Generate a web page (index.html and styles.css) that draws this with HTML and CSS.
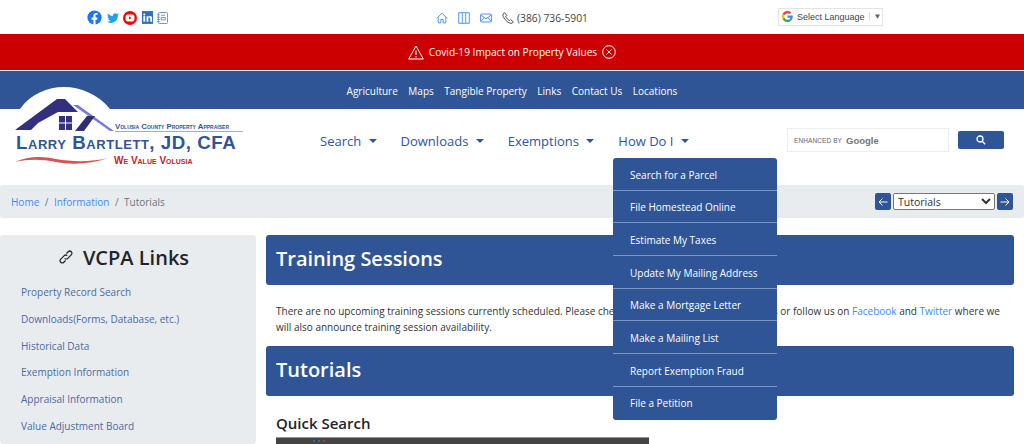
FILE: index.html
```html
<html>
<head>
    <title>Tutorials - Volusia County Property Appraiser</title>
    <link rel="stylesheet" href="styles.css">
</head>
<body>
    <!-- Top strip -->
    <div class="top-bar">
        <div class="social">
            <svg width="15" height="15" viewBox="0 0 16 16"><circle cx="8" cy="8" r="7.6" fill="#1877f2"/><path d="M6.8 16V10.3H4.8V8H6.8V6.2C6.8 4.2 8 3.1 9.8 3.1C10.6 3.1 11.3 3.2 11.3 3.2V5.1H10.3C9.4 5.1 9.1 5.7 9.1 6.3V8H11.2L10.9 10.3H9.1V16Z" fill="#fff"/></svg>
            <svg width="12" height="10" viewBox="0 0 16 13"><path d="M16 1.6C15.4 1.9 14.8 2 14.1 2.1C14.8 1.7 15.3 1.1 15.6 .3C14.9 .7 14.2 1 13.4 1.1C12.8 .4 11.9 0 11 0C9.2 0 7.7 1.5 7.7 3.3C7.7 3.6 7.7 3.8 7.8 4C5.1 3.9 2.6 2.6 1.1 .6C.8 1.1 .7 1.6 .7 2.2C.7 3.3 1.3 4.3 2.2 4.9C1.6 4.9 1.1 4.7 .7 4.5C.7 6.1 1.8 7.4 3.3 7.7C2.8 7.9 2.3 7.9 1.8 7.8C2.2 9.1 3.4 10 4.9 10.1C3.3 11.3 1.5 11.8 0 11.6C1.5 12.5 3.2 13 5 13C11 13 14.4 8 14.4 3.7V3.2C15 2.8 15.6 2.2 16 1.6Z" fill="#1da1f2"/></svg>
            <svg width="14" height="14" viewBox="0 0 14 14"><circle cx="7" cy="7" r="7" fill="#f00"/><rect x="2.6" y="3.6" width="8.8" height="6.8" rx="2" fill="#fff"/><path d="M6 5.4V8.6L8.6 7Z" fill="#f00"/></svg>
            <svg width="11" height="13" viewBox="0 0 12 14"><rect width="12" height="14" fill="#2f72b8"/><rect x="1.5" y="5.5" width="2" height="6" fill="#fff"/><circle cx="2.5" cy="3.6" r="1.1" fill="#fff"/><path d="M5 5.5H7V6.4C7.5 5.6 8.2 5.3 9 5.3C10.5 5.3 11 6.3 11 7.8V11.5H9V8.2C9 7.4 8.7 7 8 7C7.3 7 7 7.5 7 8.2V11.5H5Z" fill="#fff"/></svg>
            <svg width="11" height="12" viewBox="0 0 12 13" fill="none" stroke="#6b8fbf"><rect x="1.5" y=".5" width="10" height="12" rx="1"/><path d="M0 3H3M0 5.5H3M0 8H3M0 10.500H3M4.500 3.500H9M4.500 6H9V8.500H4.500Z"/></svg>
        </div>
        <div class="contact">
            <svg width="12" height="12" viewBox="0 0 16 16" fill="none" stroke="#3d8bfd" stroke-width="1.200"><path d="M1 8.500L8 1.500L15 8.500M3 7V14.500H6.500V10H9.500V14.500H13V7"/></svg>
            <svg width="12" height="12" viewBox="0 0 16 16" fill="none" stroke="#3d8bfd" stroke-width="1.200"><rect x="1" y="1" width="14" height="14"/><path d="M5.700 1V15M10.300 1V15"/></svg>
            <svg width="12" height="10" viewBox="0 0 16 12" fill="none" stroke="#3d8bfd" stroke-width="1.200"><rect x=".7" y=".7" width="14.600" height="10.600" rx="1.500"/><path d="M1 2L8 7L15 2M1 10.500L6 5.500M15 10.500L10 5.500"/></svg>
            <span class="phone">
                <svg width="12" height="12" viewBox="0 0 16 16" fill="none" stroke="#444" stroke-width="1.200"><path d="M3.500 1L1.500 2.500C.5 4 1.500 7 4.500 10.500C8 14.500 11.500 15.500 13.500 15L15 13L11.500 10L10 11.500C8.500 11 5.500 8 5 6L6.500 4.500Z"/></svg>
                (386) 736-5901
            </span>
        </div>
        <div class="translate">
            <svg width="11" height="11" viewBox="0 0 48 48"><path fill="#ea4335" d="M24 9.500c3.500 0 6.700 1.300 9.200 3.600l6.800-6.800C35.900 2.400 30.500 0 24 0 14.600 0 6.500 5.400 2.600 13.200l8 6.200C12.400 13.700 17.700 9.500 24 9.500z"/><path fill="#4285f4" d="M47 24.500c0-1.600-.1-3.100-.4-4.500H24v9h12.900c-.6 3-2.200 5.500-4.700 7.200l7.700 6C44.400 38 47 31.800 47 24.500z"/><path fill="#fbbc05" d="M10.500 28.600c-.5-1.500-.8-3-.8-4.600s.3-3.100.8-4.600l-8-6.200C.9 16.500 0 20.100 0 24s.9 7.500 2.600 10.800z"/><path fill="#34a853" d="M24 48c6.500 0 11.900-2.100 15.900-5.800l-7.700-6c-2.100 1.400-4.900 2.300-8.200 2.300-6.300 0-11.600-4.200-13.500-9.900l-8 6.200C6.500 42.600 14.600 48 24 48z"/></svg>
            <span class="translate-label">Select Language</span>
            <span class="translate-arrow">▼</span>
        </div>
    </div>

    <!-- Covid notice -->
    <div class="alert-bar">
        <svg width="16" height="15" viewBox="0 0 16 15" fill="none" stroke="#fff" stroke-width="1"><path d="M8 1L15.300 14H.7Z"/><path d="M8 5.500V10M8 11.200V12.500"/></svg>
        <span>Covid-19 Impact on Property Values</span>
        <svg width="14" height="14" viewBox="0 0 14 14" fill="none" stroke="#fff"><circle cx="7" cy="7" r="6.300"/><path d="M4.500 4.500L9.500 9.500M9.500 4.500L4.500 9.500"/></svg>
    </div>

    <nav class="sub-nav">
        <a href="#">Agriculture</a>
        <a href="#">Maps</a>
        <a href="#">Tangible Property</a>
        <a href="#">Links</a>
        <a href="#">Contact Us</a>
        <a href="#">Locations</a>
    </nav>

    <!-- Logo + main nav -->
    <header class="main-header">
        <div class="logo">
            <svg class="logo-art" width="244" height="84" viewBox="0 0 244 84">
                <path d="M20 23C30 8 48 1 64 1C80 1 98 8 110 23Z" fill="#fff"/>
                <path d="M73 19L78 19L114 45H110Z" fill="#7d79dc"/>
                <path d="M15 44L57 13H65L78 26H58L38 37L31 44Z" fill="#34307f"/>
                <path d="M75 45L87 30H95L84 45Z" fill="#2f2f73"/>
                <path d="M59 30H72V44H59Z" fill="#34307f"/>
                <path d="M65.500 30V44M59 37H72" stroke="#fff" stroke-width="1"/>
                <path d="M15 76C28 70 42 70 56 73C72 76 92 76 108 72C92 78 72 79 56 76C42 73 28 73 15 76Z" fill="#d8534f"/>
            </svg>
            <div class="logo-county">Volusia County Property Appraiser</div>
            <div class="logo-name">Larry Bartlett, JD, CFA</div>
            <div class="logo-motto">We Value Volusia</div>
        </div>
        <div class="main-nav">
            <a href="#">Search <i class="caret"></i></a>
            <a href="#">Downloads <i class="caret"></i></a>
            <a href="#">Exemptions <i class="caret"></i></a>
            <a href="#">How Do I <i class="caret"></i></a>
        </div>
        <div class="search">
            <div class="search-box">
                <span class="enhanced">ENHANCED BY</span>
                <span class="google">Google</span>
            </div>
            <button class="search-btn">
                <svg width="10" height="10" viewBox="0 0 12 12" fill="none" stroke="#fff" stroke-width="1.600"><circle cx="4.800" cy="4.800" r="3.600"/><path d="M7.500 7.500L11 11"/></svg>
            </button>
        </div>
    </header>

    <!-- How Do I dropdown (open) -->
    <div class="dropdown">
        <a href="#">Search for a Parcel</a>
        <a href="#">File Homestead Online</a>
        <a href="#">Estimate My Taxes</a>
        <a href="#">Update My Mailing Address</a>
        <a href="#">Make a Mortgage Letter</a>
        <a href="#">Make a Mailing List</a>
        <a href="#">Report Exemption Fraud</a>
        <a href="#">File a Petition</a>
    </div>

    <div class="crumbs">
        <div class="crumb-list">
            <a href="#">Home</a><span class="sep">/</span><a href="#">Information</a><span class="sep">/</span><span class="current">Tutorials</span>
        </div>
        <div class="crumb-tools">
            <button class="arrow-btn">
                <svg width="10" height="10" viewBox="0 0 10 10" fill="none" stroke="#fff"><path d="M9.500 5H1M4.500 1.500L1 5L4.500 8.500"/></svg>
            </button>
            <select class="page-select"><option>Tutorials</option></select>
            <button class="arrow-btn">
                <svg width="10" height="10" viewBox="0 0 10 10" fill="none" stroke="#fff"><path d="M.5 5H9M5.500 1.500L9 5L5.500 8.500"/></svg>
            </button>
        </div>
    </div>

    <div class="page">
        <aside class="sidebar">
            <h2>
                <svg width="14" height="14" viewBox="0 0 16 16" fill="none" stroke="#222" stroke-width="1.400"><path d="M6.500 9.500C7.500 10.500 9 10.500 10 9.500L14 5.500C15 4.500 15 3 14 2C13 1 11.500 1 10.500 2L8.500 4"/><path d="M9.500 6.500C8.500 5.500 7 5.500 6 6.500L2 10.500C1 11.500 1 13 2 14C3 15 4.500 15 5.500 14L7.500 12"/></svg>
                VCPA Links
            </h2>
            <a href="#">Property Record Search</a>
            <a href="#">Downloads(Forms, Database, etc.)</a>
            <a href="#">Historical Data</a>
            <a href="#">Exemption Information</a>
            <a href="#">Appraisal Information</a>
            <a href="#">Value Adjustment Board</a>
        </aside>
        <main class="content">
            <h1 class="banner">Training Sessions</h1>
            <p class="notice">There are no upcoming training sessions currently scheduled. Please check back later for new training dates or follow us on <a href="#">Facebook</a> and <a href="#">Twitter</a> where we will also announce training session availability.</p>
            <h1 class="banner">Tutorials</h1>
            <h3 class="section-title">Quick Search</h3>
            <div class="video">
                <i class="dot dot-blue"></i>
                <i class="dot dot-blue"></i>
                <i class="dot dot-red"></i>
            </div>
        </main>
    </div>
</body>
</html>
```

FILE: styles.css
```css
html, body {
    height: 444px;
    overflow: hidden;
}

body {
    margin: 0;
    font-family: 'Open Sans', sans-serif;
    font-size: 10px;
    color: #333;
    background-color: #fff;
    position: relative;
}

a {
    text-decoration: none;
}

/* Top strip */
.top-bar {
    display: flex;
    align-items: center;
    height: 34px;
    padding-top: 1px;
    box-sizing: border-box;
}

.social {
    display: flex;
    align-items: center;
    gap: 4.500px;
    width: 349px;
    padding-left: 87px;
    box-sizing: border-box;
}

.contact {
    display: flex;
    align-items: center;
    gap: 10px;
    width: 429px;
    padding-left: 87px;
    box-sizing: border-box;
    font-size: 10.300px;
    color: #444;
}

.phone {
    display: flex;
    align-items: center;
    gap: 3px;
}

.translate {
    display: flex;
    align-items: center;
    gap: 4px;
    width: 105px;
    height: 18px;
    margin-top: -2px;
    padding-left: 3px;
    box-sizing: border-box;
    border: 1px solid #e4e4e4;
    font-family: 'Liberation Sans', sans-serif;
    font-size: 9px;
    white-space: nowrap;
    color: #444;
}

.translate-arrow {
    border-left: 1px solid #ddd;
    padding-left: 4px;
    font-size: 8px;
    color: #666;
}

.alert-bar {
    display: flex;
    align-items: center;
    justify-content: center;
    gap: 5px;
    height: 37px;
    border-bottom: 1px solid #fff;
    box-sizing: border-box;
    background-color: #cc0000;
    color: #fff;
    font-size: 10.150px;
}

.sub-nav {
    display: flex;
    justify-content: center;
    align-items: center;
    gap: 10.500px;
    height: 38px;
    padding-top: 1px;
    box-sizing: border-box;
    background-color: #2f5597;
}

.sub-nav a {
    color: #fff;
    font-size: 10px;
}

/* Logo row */
.main-header {
    display: flex;
    align-items: flex-start;
    height: 76px;
}

.logo {
    position: relative;
    width: 320px;
    flex-shrink: 0;
}

.logo-art {
    position: absolute;
    left: 0;
    top: -23px;
}

.logo-county {
    position: absolute;
    left: 115px;
    top: 13px;
    width: 128px;
    border-bottom: 1px solid #9db0d0;
    font-family: 'Liberation Sans', sans-serif;
    font-size: 7.800px;
    font-weight: bold;
    font-variant: small-caps;
    white-space: nowrap;
    color: #2f5597;
}

.logo-name {
    position: absolute;
    left: 16px;
    top: 23px;
    font-family: 'Liberation Sans', sans-serif;
    font-size: 18.700px;
    font-weight: bold;
    font-variant: small-caps;
    letter-spacing: .55px;
    white-space: nowrap;
    color: #2f5597;
}

.logo-motto {
    position: absolute;
    left: 114px;
    top: 46px;
    font-family: 'Liberation Sans', sans-serif;
    font-size: 10px;
    font-weight: bold;
    font-variant: small-caps;
    white-space: nowrap;
    color: #c8202a;
}

.main-nav {
    display: flex;
    gap: 24px;
    width: 467px;
    padding-top: 23px;
}

.main-nav a {
    color: #2f5597;
    font-size: 13px;
}

.caret {
    display: inline-block;
    margin-left: 4px;
    vertical-align: 3px;
    border-top: 4.500px solid #2f5597;
    border-left: 4.500px solid transparent;
    border-right: 4.500px solid transparent;
}

.search {
    display: flex;
    align-items: flex-start;
    gap: 9px;
    padding-top: 19px;
}

.search-box {
    display: flex;
    align-items: center;
    gap: 4px;
    width: 162px;
    height: 24px;
    padding-left: 6px;
    box-sizing: border-box;
    border: 1px solid #eee;
}

.enhanced {
    font-family: 'Liberation Sans', sans-serif;
    font-size: 6.500px;
    letter-spacing: .1px;
    color: #666;
}

.google {
    font-family: 'Liberation Sans', sans-serif;
    font-size: 9.500px;
    font-weight: bold;
    color: #757575;
}

.search-btn {
    display: flex;
    align-items: center;
    justify-content: center;
    width: 46px;
    height: 18px;
    margin-top: 3px;
    padding: 0;
    border: none;
    border-radius: 2px;
    background-color: #2f5597;
}

/* Open dropdown */
.dropdown {
    position: absolute;
    left: 613px;
    top: 158px;
    z-index: 5;
    width: 164px;
    box-sizing: border-box;
    border-radius: 3px;
    background-color: #2f5597;
}

.dropdown a {
    display: block;
    height: 32.700px;
    padding: 9.500px 17px 0;
    box-sizing: border-box;
    border-bottom: 1px solid #7f97bd;
    color: #fff;
    font-size: 10px;
    white-space: nowrap;
}

.dropdown a:last-child {
    border-bottom: none;
}

/* Breadcrumb */
.crumbs {
    display: flex;
    align-items: center;
    justify-content: space-between;
    height: 33px;
    padding: 0 11px;
    box-sizing: border-box;
    border-radius: 3px;
    background-color: #e9ecef;
}

.crumb-list a {
    color: #3d8bfd;
}

.sep {
    margin: 0 5.500px;
    color: #6c757d;
}

.current {
    color: #6c757d;
}

.crumb-tools {
    display: flex;
    align-items: center;
    gap: 2px;
}

.arrow-btn {
    display: flex;
    align-items: center;
    justify-content: center;
    width: 16px;
    height: 17px;
    padding: 0;
    border: none;
    border-radius: 2px;
    background-color: #2f5597;
}

.page-select {
    width: 102px;
    height: 17px;
    padding: 0;
    border: 1px solid #767676;
    border-radius: 2px;
    font-family: 'Open Sans', sans-serif;
    font-size: 10.500px;
    color: #333;
    background-color: #fff;
}

/* Page columns */
.page {
    display: flex;
    gap: 10px;
    padding: 17px 10px 0 0;
}

.sidebar {
    width: 256px;
    height: 209px;
    flex-shrink: 0;
    border-radius: 3px;
    background-color: #e9ecef;
}

.sidebar h2 {
    display: flex;
    align-items: center;
    justify-content: center;
    gap: 10px;
    height: 44px;
    margin: 0;
    padding-right: 8px;
    font-size: 20px;
    font-weight: 600;
    color: #212529;
}

.sidebar a {
    display: block;
    height: 26.800px;
    padding-left: 21px;
    color: #4a6ba5;
    font-size: 10px;
    line-height: 26px;
}

.content {
    flex: 1;
}

.banner {
    height: 50px;
    margin: 0;
    padding-left: 10px;
    border-radius: 3px;
    background-color: #2f5597;
    color: #fff;
    font-size: 20px;
    font-weight: 600;
    line-height: 47px;
}

.notice {
    margin: 0;
    padding: 18px 10px 0;
    height: 43px;
    font-size: 10px;
    line-height: 16px;
    color: #333;
}

.notice a {
    color: #3d8bfd;
}

.section-title {
    margin: 0;
    padding: 17px 10px 0;
    height: 24px;
    font-size: 15px;
    font-weight: 600;
    color: #212529;
}

/* only the top of the video still shows above the fold */
.video {
    display: flex;
    align-items: center;
    gap: 3px;
    width: 373px;
    height: 7px;
    margin-left: 10px;
    padding-left: 37px;
    box-sizing: border-box;
    border-top: 1px solid #999;
    background-color: #444;
}

.dot {
    width: 2px;
    height: 2px;
    border-radius: 50%;
}

.dot-blue {
    background-color: #3f6fc0;
}

.dot-red {
    background-color: #c33;
}
```
